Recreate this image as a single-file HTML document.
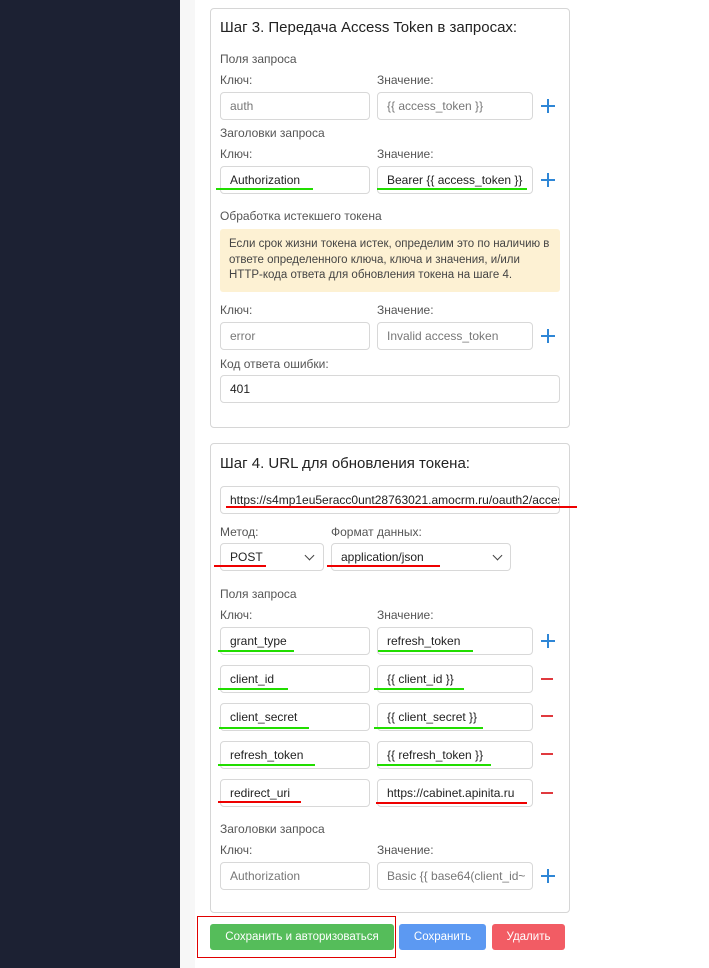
<!DOCTYPE html>
<html><head><meta charset="utf-8"><style>
*{box-sizing:border-box;margin:0;padding:0}
body{width:709px;height:968px;position:relative;overflow:hidden;background:#fff;font-family:"Liberation Sans","DejaVu Sans",sans-serif;font-size:12px;color:#333}
.a{position:absolute}
.side{left:0;top:0;width:180px;height:968px;background:#1c2133}
.strip{left:180px;top:0;width:15px;height:968px;background:#f7f7f7}
.card{border:1px solid #d6d6d6;border-radius:4px;background:#fff}
.t{font-size:15px;color:#222;white-space:nowrap}
.l{color:#555;white-space:nowrap;font-size:12px}
.in{border:1px solid #d8d8d8;border-radius:4px;height:28px;padding-left:9px;line-height:27px;white-space:nowrap;overflow:hidden;color:#222;background:#fff}
.ph{color:#777}
.p{width:14px;height:14px}
.p:before{content:"";position:absolute;left:0;top:6px;width:14px;height:2px;background:#2e86d6}
.p:after{content:"";position:absolute;left:6px;top:0;width:2px;height:14px;background:#2e86d6}
.m{width:12px;height:2px;background:#e0393e}
.g{height:2px;background:#22dd00}
.r{height:2px;background:#ee0000}
.btn{height:26px;border-radius:3px;color:#fff;text-align:center;line-height:26px;font-size:11.5px}
.chev{width:7px;height:7px;border-right:1.5px solid #444;border-bottom:1.5px solid #444;transform:rotate(45deg)}
</style></head><body>
<div class="a side"></div><div class="a strip"></div>

<div class="a card" style="left:210px;top:8px;width:360px;height:420px"></div>
<div class="a t" style="left:220px;top:19px">Шаг 3. Передача Access Token в запросах:</div>
<div class="a l" style="left:220px;top:52px">Поля запроса</div>
<div class="a l" style="left:220px;top:73px">Ключ:</div>
<div class="a l" style="left:377px;top:73px">Значение:</div>
<div class="a in ph" style="left:220px;top:92px;width:150px">auth</div>
<div class="a in ph" style="left:377px;top:92px;width:156px">{{ access_token }}</div>
<div class="a p" style="left:541px;top:99px"></div>
<div class="a l" style="left:220px;top:126px">Заголовки запроса</div>
<div class="a l" style="left:220px;top:147px">Ключ:</div>
<div class="a l" style="left:377px;top:147px">Значение:</div>
<div class="a in" style="left:220px;top:166px;width:150px">Authorization</div>
<div class="a in" style="left:377px;top:166px;width:156px">Bearer {{ access_token }}</div>
<div class="a p" style="left:541px;top:173px"></div>
<div class="a g" style="left:216px;top:188px;width:97px"></div>
<div class="a g" style="left:377px;top:188px;width:150px"></div>
<div class="a l" style="left:220px;top:209px">Обработка истекшего токена</div>
<div class="a" style="left:220px;top:229px;width:340px;height:63px;background:#fdf1d3;border-radius:3px;padding:8px 9px;font-size:11.5px;line-height:15.5px;color:#444">Если срок жизни токена истек, определим это по наличию в ответе определенного ключа, ключа и значения, и/или HTTP-кода ответа для обновления токена на шаге 4.</div>
<div class="a l" style="left:220px;top:303px">Ключ:</div>
<div class="a l" style="left:377px;top:303px">Значение:</div>
<div class="a in ph" style="left:220px;top:322px;width:150px">error</div>
<div class="a in ph" style="left:377px;top:322px;width:156px">Invalid access_token</div>
<div class="a p" style="left:541px;top:329px"></div>
<div class="a l" style="left:220px;top:357px">Код ответа ошибки:</div>
<div class="a in" style="left:220px;top:375px;width:340px">401</div>

<div class="a card" style="left:210px;top:443px;width:360px;height:470px"></div>
<div class="a t" style="left:220px;top:455px">Шаг 4. URL для обновления токена:</div>
<div class="a in" style="left:220px;top:486px;width:340px">https://s4mp1eu5eracc0unt28763021.amocrm.ru/oauth2/access_token</div>
<div class="a r" style="left:226px;top:506px;width:351px"></div>
<div class="a l" style="left:220px;top:525px">Метод:</div>
<div class="a l" style="left:331px;top:525px">Формат данных:</div>
<div class="a in" style="left:220px;top:543px;width:104px">POST</div>
<div class="a chev" style="left:306px;top:552px"></div>
<div class="a in" style="left:331px;top:543px;width:180px">application/json</div>
<div class="a chev" style="left:494px;top:552px"></div>
<div class="a r" style="left:214px;top:565px;width:52px"></div>
<div class="a r" style="left:327px;top:565px;width:113px"></div>
<div class="a l" style="left:220px;top:587px">Поля запроса</div>
<div class="a l" style="left:220px;top:608px">Ключ:</div>
<div class="a l" style="left:377px;top:608px">Значение:</div>

<div class="a in" style="left:220px;top:627px;width:150px">grant_type</div>
<div class="a in" style="left:377px;top:627px;width:156px">refresh_token</div>
<div class="a p" style="left:541px;top:634px"></div>
<div class="a g" style="left:218px;top:650px;width:76px"></div>
<div class="a g" style="left:378px;top:650px;width:95px"></div>

<div class="a in" style="left:220px;top:665px;width:150px">client_id</div>
<div class="a in" style="left:377px;top:665px;width:156px">{{ client_id }}</div>
<div class="a m" style="left:541px;top:678px"></div>
<div class="a g" style="left:218px;top:688px;width:70px"></div>
<div class="a g" style="left:374px;top:688px;width:90px"></div>

<div class="a in" style="left:220px;top:703px;width:150px">client_secret</div>
<div class="a in" style="left:377px;top:703px;width:156px">{{ client_secret }}</div>
<div class="a m" style="left:541px;top:715px"></div>
<div class="a g" style="left:219px;top:727px;width:90px"></div>
<div class="a g" style="left:374px;top:727px;width:109px"></div>

<div class="a in" style="left:220px;top:741px;width:150px">refresh_token</div>
<div class="a in" style="left:377px;top:741px;width:156px">{{ refresh_token }}</div>
<div class="a m" style="left:541px;top:753px"></div>
<div class="a g" style="left:218px;top:764px;width:97px"></div>
<div class="a g" style="left:377px;top:764px;width:114px"></div>

<div class="a in" style="left:220px;top:779px;width:150px">redirect_uri</div>
<div class="a in" style="left:377px;top:779px;width:156px">https://cabinet.apinita.ru</div>
<div class="a m" style="left:541px;top:792px"></div>
<div class="a r" style="left:218px;top:801px;width:83px"></div>
<div class="a r" style="left:376px;top:802px;width:151px"></div>

<div class="a l" style="left:220px;top:822px">Заголовки запроса</div>
<div class="a l" style="left:220px;top:843px">Ключ:</div>
<div class="a l" style="left:377px;top:843px">Значение:</div>
<div class="a in ph" style="left:220px;top:862px;width:150px">Authorization</div>
<div class="a in ph" style="left:377px;top:862px;width:156px">Basic {{ base64(client_id~</div>
<div class="a p" style="left:541px;top:869px"></div>

<div class="a" style="left:197px;top:916px;width:199px;height:42px;border:1.5px solid #e00000"></div>
<div class="a btn" style="left:210px;top:924px;width:184px;background:#55bd5a">Сохранить и авторизоваться</div>
<div class="a btn" style="left:399px;top:924px;width:87px;background:#5c99f2">Сохранить</div>
<div class="a btn" style="left:492px;top:924px;width:73px;background:#f25c64">Удалить</div>
</body></html>
